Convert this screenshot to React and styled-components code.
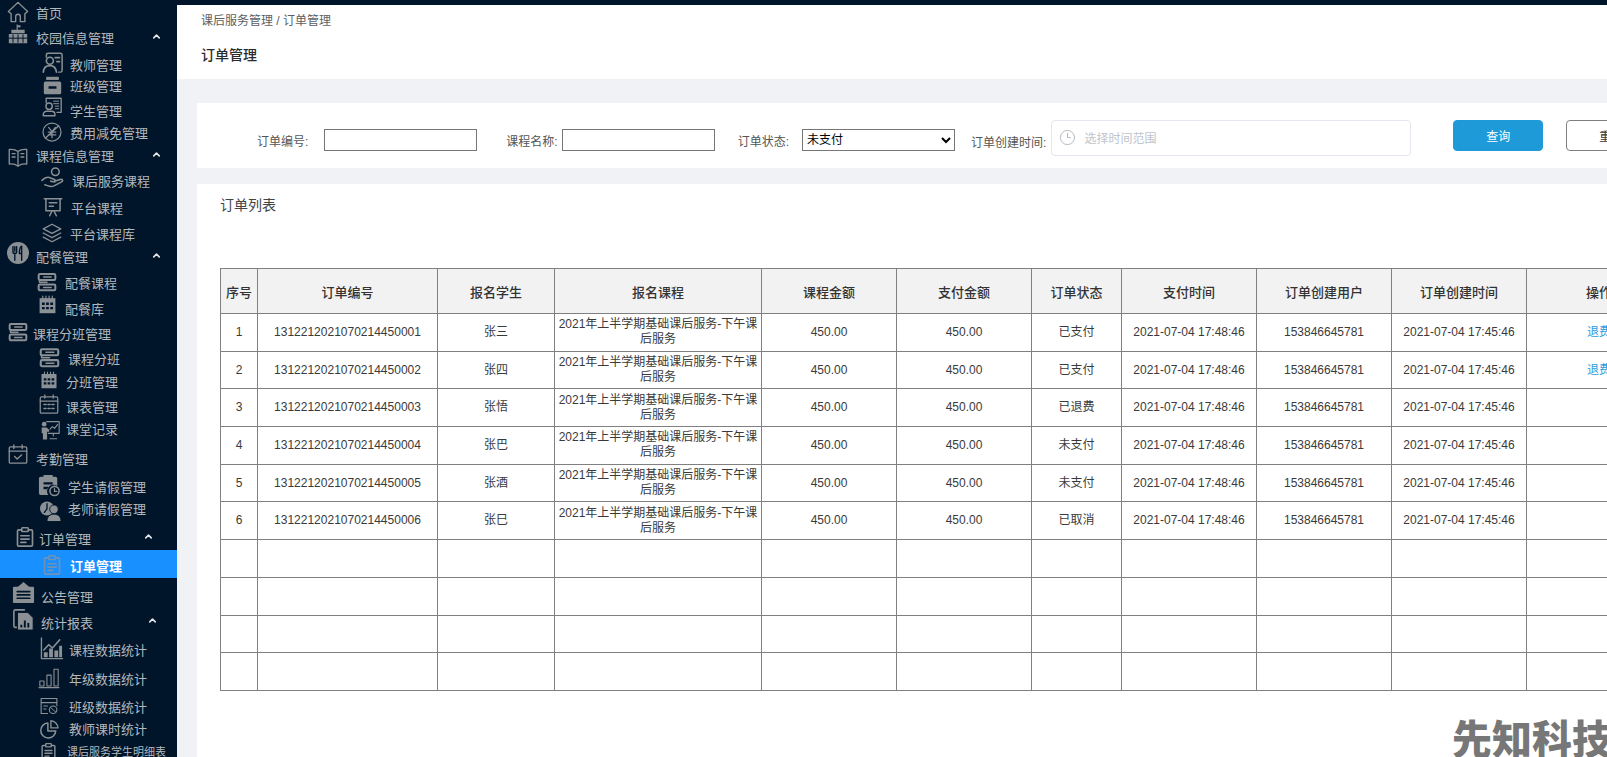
import styled, { createGlobalStyle } from "styled-components";
import { ChevronUp, Clock3 } from "lucide-react";

const NAVY = "#001529";

const GlobalStyle = createGlobalStyle`
  html, body {
    margin: 0;
    height: 100%;
    overflow: hidden;
    background: #fff;
  }
  body {
    font-family: "Liberation Sans", "Noto Sans CJK SC", sans-serif;
    font-size: 12px;
  }
`;

const Page = styled.div`
  display: flex;
  position: relative;
  width: 100%;
  height: 757px;
  overflow: hidden;
`;

// Sidebar
const Sidebar = styled.nav`
  flex: 0 0 177px;
  height: 757px;
  overflow: hidden;
  background: ${NAVY};
`;

const MenuRow = styled.div`
  display: flex;
  align-items: center;
  box-sizing: border-box;
  height: ${(p) => p.$h}px;
  padding-left: ${(p) => p.$left}px;
  padding-top: ${(p) => p.$pt || 0}px;
  padding-right: ${(p) => p.$cr || 15}px;
  background: ${(p) => (p.$active ? "#1890ff" : "transparent")};
  color: ${(p) => (p.$active ? "#fff" : "#b3b8bd")};
  font-size: ${(p) => p.$fs || 13}px;
  font-weight: ${(p) => (p.$active ? 700 : 400)};
  white-space: nowrap;
`;

const IconSlot = styled.span`
  display: flex;
  flex: 0 0 ${(p) => p.$w}px;
  align-items: center;
  color: ${(p) => (p.$active ? "#6f93b5" : "#8b9095")};
`;

const IconSvg = styled.svg`
  display: block;
  flex: none;
  overflow: visible;
  margin-top: ${(p) => (p.$dy || 0) * 2}px;
`;

const Caret = styled(ChevronUp)`
  margin-left: auto;
  margin-top: -3px;
  color: #e3e6e9;
`;

const Icon = ({ name, size, dy }) => (
  <IconSvg
    $dy={dy}
    width={size}
    height={size}
    viewBox="0 0 24 24"
    fill="none"
    stroke="currentColor"
    strokeWidth="1.7"
    strokeLinecap="round"
    strokeLinejoin="round"
  >
    {ICONS[name]}
  </IconSvg>
);

const Flow = (
  <>
    <rect x="2" y="2.5" width="20" height="7" rx="1.5" strokeWidth="2.4" />
    <rect x="2" y="15" width="20" height="7" rx="1.5" strokeWidth="2.4" />
    <path d="M3 9.5v2.7h9M8 6h9M8 18.5h9" strokeWidth="1.8" />
  </>
);

const SolidCalendar = (
  <>
    <rect x="2" y="4" width="20" height="19" fill="currentColor" stroke="none" />
    <path d="M6 1.5v4M10 1.5v4M14 1.5v4M18 1.5v4" strokeWidth="1.5" />
    <path
      d="M5 9.5h3.5v3H5zM10.2 9.5h3.5v3h-3.5zM15.5 9.5H19v3h-3.5zM5 15h3.5v3H5zM10.2 15h3.5v3h-3.5zM15.5 15H19v3h-3.5z"
      fill={NAVY}
      stroke="none"
    />
  </>
);

const Clipboard = (
  <>
    <path d="M8 3.5H4.5A1.5 1.5 0 0 0 3 5v16.5A1.5 1.5 0 0 0 4.5 23h15a1.5 1.5 0 0 0 1.5-1.5V5a1.5 1.5 0 0 0-1.5-1.5H16" strokeWidth="2" />
    <rect x="8" y="1" width="8" height="4.5" rx="1" strokeWidth="1.8" />
    <path d="M7 10.5h10M7 14.5h10M7 18.5h6" strokeWidth="2" />
  </>
);

const ICONS = {
  home: <path d="M1.5 11.5 12 1.5l10.5 10-3 2.5v8.5h-5V17a2.5 2.5 0 0 0-5 0v5.5h-5V14z" strokeWidth="1.5" />,
  school: (
    <>
      <path d="M11 1v6" strokeWidth="1.4" />
      <path d="M11 1.5h4v2.5h-4z" fill="currentColor" stroke="none" />
      <path d="M4 7h16v4H4zM1 12h22v11H1z" fill="currentColor" stroke="none" />
      <path d="M1 17h22M6 13v9M12 13v9M18 13v9" stroke={NAVY} strokeWidth="1.2" />
    </>
  ),
  teacher: (
    <>
      <path d="M5 6V3.5A2 2 0 0 1 7 1.5h14a2 2 0 0 1 2 2V21a2 2 0 0 1-2 2h-2" strokeWidth="1.7" />
      <circle cx="9" cy="10" r="4" strokeWidth="1.9" />
      <path d="M1.5 23c.3-4.500 3-7.500 7.500-7.500s7 3 7.500 7.500M15 6.500h5M17 11h3" strokeWidth="1.9" />
    </>
  ),
  classRoom: (
    <>
      <path d="M4 1h16v4H4z" fill="currentColor" stroke="none" />
      <path fillRule="evenodd" d="M3 7h18a2 2 0 0 1 2 2v12a2 2 0 0 1-2 2H3a2 2 0 0 1-2-2V9a2 2 0 0 1 2-2zm4 6v3h10v-3z" fill="currentColor" stroke="none" />
    </>
  ),
  student: (
    <>
      <path d="M5 7V1.500h18v17h-5" strokeWidth="1.6" />
      <circle cx="8.500" cy="11" r="3.800" strokeWidth="1.7" />
      <path d="M1.500 22.500v-1.500a4 4 0 0 1 4-4h6a4 4 0 0 1 4 4v1.500z" strokeWidth="1.7" />
      <path d="M14 5h6M14 8h6M16 11h4M16 14h4" strokeWidth="1.2" />
    </>
  ),
  fee: (
    <>
      <circle cx="12" cy="12" r="10.800" strokeWidth="1.500" />
      <path d="M8 6.500l4 5 4-5M7.500 12h9M7.500 15.500h9M12 11.500V19M20 4.500 4 19.500" strokeWidth="1.500" />
    </>
  ),
  book: (
    <>
      <path d="M12 5.500C9.500 3.500 5.500 2.500 1.500 3v17.500c4-.5 8 .5 10.500 2.500 2.500-2 6.500-3 10.500-2.500V3c-4-.5-8 .5-10.500 2.500zM12 5.500V23" strokeWidth="1.600" />
      <path d="M5 8h3.500M5 12h3.500M15.500 8H19M15.500 12H19" strokeWidth="1.600" />
    </>
  ),
  hand: (
    <>
      <circle cx="15" cy="6" r="4" strokeWidth="1.600" />
      <path d="M1 15c3-3 6-4 9-2.500l4 1.500c2 1 1 3-1 2.500l-3-.7M14 16l6-2c2.500-.6 3.500 1.500 1.500 2.500L13 21c-3 1.300-6-.5-9-1.500" strokeWidth="1.600" />
    </>
  ),
  board: (
    <>
      <path d="M1.500 2h21M3.500 2v14.500h17V2M8 22.500l3-6M16 22.500l-3-6M7.500 7h9M7.500 11h5" strokeWidth="1.800" />
    </>
  ),
  layers: (
    <>
      <path d="M12 1.500 22.500 7 12 12.500 1.500 7zM1.500 12 12 17.500 22.500 12M1.500 17 12 22.500 22.500 17" strokeWidth="1.600" />
    </>
  ),
  fork: (
    <>
      <circle cx="12" cy="12" r="12" fill="currentColor" stroke="none" />
      <path d="M6.500 5v5.500a2 2 0 0 0 2 2V20M8.500 5v5M10.500 5v5.500a2 2 0 0 1-2 2M16 4.500V20M16 4.500c-1.800 1-2.500 3.500-2.500 8H16" stroke={NAVY} strokeWidth="1.500" />
    </>
  ),
  flow: Flow,
  calendarSolid: SolidCalendar,
  calendarDots: (
    <>
      <rect x="1.500" y="3.500" width="21" height="19.500" rx="1.500" strokeWidth="1.500" />
      <path d="M1.500 8.500h21M7 1v4M17 1v4" strokeWidth="1.500" />
      <path d="M6 12.500h2.500M10.800 12.500h2.500M15.500 12.500H18M6 17.500h2.500M10.800 17.500h2.500M15.500 17.500H18" strokeWidth="1.800" />
    </>
  ),
  lecture: (
    <>
      <circle cx="5" cy="5" r="2.800" fill="currentColor" stroke="none" />
      <path d="M2 9h6l3 3v2H8.500v9.500h-5V16H2z" fill="currentColor" stroke="none" />
      <path d="M8 2h15v14H10M16 16v3M12 22.500h8M12 11l3-3 2.500 2 3.500-4.500" strokeWidth="1.400" />
    </>
  ),
  calendarCheck: (
    <>
      <rect x="1.500" y="3.500" width="21" height="19.500" rx="1.500" strokeWidth="1.600" />
      <path d="M1.500 8.500h21M7 1v4.500M17 1v4.500M8 15l3 3 5.500-5" strokeWidth="1.600" />
    </>
  ),
  leave: (
    <>
      <path fillRule="evenodd" d="M3 3h3V1h10v2h3a2 2 0 0 1 2 2v8.200A7 7 0 0 0 11.200 23H3a2 2 0 0 1-2-2V5a2 2 0 0 1 2-2zm3 6v2.500h10V9zm0 5v2.500h5V14z" fill="currentColor" stroke="none" />
      <circle cx="18" cy="18.500" r="5" strokeWidth="1.700" />
      <path d="M18 16v3h2.500" strokeWidth="1.400" />
    </>
  ),
  teacherLeave: (
    <>
      <circle cx="8" cy="8.500" r="8" fill="currentColor" stroke="none" />
      <path d="M8 3v6l-3 4" stroke={NAVY} strokeWidth="1.500" />
      <circle cx="16" cy="9.500" r="5" fill="currentColor" stroke={NAVY} strokeWidth="1" />
      <path d="M8 23c0-5 3-8 8-8s8 3 8 8z" fill="currentColor" stroke={NAVY} strokeWidth="1" />
    </>
  ),
  clipboard: Clipboard,
  notice: (
    <>
      <path d="M12 1 5 7h14z" fill="currentColor" stroke="none" />
      <rect x="1" y="6" width="22" height="17" rx="1" fill="currentColor" stroke="none" />
      <path d="M5.500 11h13M5.500 14.500h13M5.500 18h13" stroke={NAVY} strokeWidth="1.800" />
    </>
  ),
  report: (
    <>
      <path d="M4 21H2.500A1.500 1.500 0 0 1 1 19.500V2.500A1.500 1.500 0 0 1 2.500 1H13" strokeWidth="1.800" />
      <path d="M5.500 4H17l6 6v14H5.500z" fill="currentColor" stroke={NAVY} strokeWidth="1" />
      <path d="M9.500 21v-3M13.500 21v-8M17.500 21v-5" stroke={NAVY} strokeWidth="2.200" strokeLinecap="butt" />
    </>
  ),
  chart: (
    <>
      <path d="M1.500 1v21.500h22" strokeWidth="1.400" />
      <path d="M4 13.500 9 8l4 3.500L20.500 3" strokeWidth="1.600" />
      <path d="M4 16h4v5H4zM9.500 12h4v9h-4zM15 14h4v7h-4zM20 9h3v12h-3z" fill="currentColor" stroke="none" />
    </>
  ),
  bars: (
    <>
      <path d="M1 15.500h5v6H1zM9.500 8.500h5v13h-5zM18 1.500h5v20h-5zM0 23.500h24" strokeWidth="1.300" />
    </>
  ),
  panel: (
    <>
      <path d="M10 22H1.500V2h21v9.500M1.500 7.500h21M5 12h5M5 16h3" strokeWidth="1.500" />
      <circle cx="17.500" cy="17" r="5" strokeWidth="1.500" />
      <path d="M14 14l7 6" strokeWidth="1.300" />
    </>
  ),
  pie: (
    <>
      <path d="M10.500 4a10 10 0 1 0 10.500 10.500H10.500z" strokeWidth="2" />
      <path d="M14.500 1v9.500H24A10 10 0 0 0 14.500 1z" strokeWidth="1.800" />
    </>
  ),
};

// left: icon x, text: label x, size: icon size, dy: icon shift from the text line
const MENU = [
  { label: "首页", icon: "home", left: 7, text: 36, size: 22, dy: -0.5, h: 24 },
  { label: "校园信息管理", icon: "school", left: 8, text: 36, size: 20, dy: -4, h: 25, pt: 2, open: true },
  { label: "教师管理", icon: "teacher", left: 42, text: 70, size: 21, dy: -1.5, h: 25, pt: 5 },
  { label: "班级管理", icon: "classRoom", left: 43, text: 70, size: 19, dy: 0, h: 22 },
  { label: "学生管理", icon: "student", left: 42, text: 70, size: 20, dy: -3.5, h: 23, pt: 6 },
  { label: "费用减免管理", icon: "fee", left: 42, text: 70, size: 20, dy: -0.5, h: 23, pt: 4 },
  { label: "课程信息管理", icon: "book", left: 8, text: 36, size: 20, dy: 1, h: 25, pt: 2, open: true },
  { label: "课后服务课程", icon: "hand", left: 41, text: 72, size: 23, dy: -3, h: 25, pt: 2 },
  { label: "平台课程", icon: "board", left: 43, text: 71, size: 20, dy: 0, h: 26, pt: 4 },
  { label: "平台课程库", icon: "layers", left: 42, text: 70, size: 20, dy: -0.5, h: 25, pt: 5 },
  { label: "配餐管理", icon: "fork", left: 7, text: 36, size: 22, dy: -3.5, h: 25, pt: 2, open: true },
  { label: "配餐课程", icon: "flow", left: 37, text: 65, size: 20, dy: 0, h: 26, pt: 2 },
  { label: "配餐库", icon: "calendarSolid", left: 38, text: 65, size: 19, dy: -4, h: 25, pt: 4 },
  { label: "课程分班管理", icon: "flow", left: 8, text: 33, size: 20, dy: -1.5, h: 25, pt: 4 },
  { label: "课程分班", icon: "flow", left: 39, text: 68, size: 21, dy: -1, h: 24, pt: 4 },
  { label: "分班管理", icon: "calendarSolid", left: 40, text: 66, size: 18, dy: -1.5, h: 25, pt: 2 },
  { label: "课表管理", icon: "calendarDots", left: 39, text: 66, size: 20, dy: -2.5, h: 21, pt: 5 },
  { label: "课堂记录", icon: "lecture", left: 40, text: 66, size: 20, dy: 2, h: 28 },
  { label: "考勤管理", icon: "calendarCheck", left: 8, text: 36, size: 20, dy: -4, h: 30, pt: 2 },
  { label: "学生请假管理", icon: "leave", left: 38, text: 68, size: 22, dy: -1, h: 24, pt: 4 },
  { label: "老师请假管理", icon: "teacherLeave", left: 40, text: 68, size: 21, dy: 3, h: 24 },
  { label: "订单管理", icon: "clipboard", left: 15, text: 39, size: 20, dy: -1, h: 30, pt: 6, open: true, cr: 23 },
  { label: "订单管理", icon: "clipboard", left: 42, text: 70, size: 20, dy: -0.5, h: 28, pt: 2, active: true },
  { label: "公告管理", icon: "notice", left: 12, text: 41, size: 23, dy: -4, h: 30, pt: 6 },
  { label: "统计报表", icon: "report", left: 13, text: 41, size: 21, dy: -2.5, h: 28, open: true, cr: 19 },
  { label: "课程数据统计", icon: "chart", left: 40, text: 69, size: 23, dy: -1, h: 27 },
  { label: "年级数据统计", icon: "bars", left: 39, text: 69, size: 20, dy: 0, h: 28, pt: 2 },
  { label: "班级数据统计", icon: "panel", left: 40, text: 69, size: 18, dy: 0, h: 25, pt: 5 },
  { label: "教师课时统计", icon: "pie", left: 40, text: 69, size: 18, dy: 1, h: 22, pt: 2 },
  { label: "课后服务学生明细表", icon: "clipboard", left: 40, text: 67, size: 17, dy: 0, h: 22, pt: 4, fs: 11 },
];

// Main area
const Main = styled.main`
  flex: 1;
  min-width: 0;
  overflow: hidden;
  background: #f0f2f5;
`;

const TopStrip = styled.div`
  height: 5px;
  background: ${NAVY};
`;

const Header = styled.header`
  box-sizing: border-box;
  height: 74px;
  padding: 8px 24px 0;
  background: #fff;
`;

const Breadcrumb = styled.div`
  line-height: 16px;
  color: #5c5f64;
`;

const PageTitle = styled.h1`
  margin: 16px 0 0;
  font-size: 14px;
  font-weight: 500;
  line-height: 20px;
  color: #2b2b2b;
`;

const Content = styled.div`
  display: flex;
  flex-direction: column;
  gap: 16px;
  width: 1480px;
  padding: 24px 0 0 20px;
`;

const SearchCard = styled.section`
  display: flex;
  align-items: flex-start;
  box-sizing: border-box;
  height: 65px;
  padding: 17px 0 0 60px;
  background: #fff;
`;

const Field = styled.div`
  display: flex;
  flex: none;
  align-items: center;
  gap: ${(p) => p.$gap}px;
  box-sizing: border-box;
  height: 36px;
  margin-left: ${(p) => p.$ml || 0}px;
  padding-top: ${(p) => (p.$low ? 4 : 0)}px;
`;

const Label = styled.label`
  color: #555;
  white-space: nowrap;
  padding-top: ${(p) => p.$pt || 0}px;
`;

const TextInput = styled.input`
  box-sizing: border-box;
  width: 153px;
  height: 22px;
  padding: 1px 6px;
  border: 1px solid #767676;
  background: #fff;
`;

const StatusSelect = styled.select`
  box-sizing: border-box;
  width: 153px;
  height: 22px;
  border: 1px solid #767676;
  background: #fff;
  color: #000;
  font-family: inherit;
  font-size: 12px;
`;

const RangePicker = styled.div`
  display: flex;
  align-items: center;
  gap: 8px;
  box-sizing: border-box;
  width: 360px;
  height: 36px;
  padding: 0 0 2px 7px;
  border: 1px solid #e4e7ed;
  border-radius: 4px;
  color: #c0c4cc;
`;

const PickerClock = styled(Clock3)`
  color: #a9adb3;
`;

const Button = styled.button`
  flex: none;
  width: 90px;
  height: 31px;
  margin-left: ${(p) => p.$ml}px;
  border: 1px solid ${(p) => (p.$primary ? "#1e9ad9" : "#7f7f7f")};
  border-radius: 4px;
  background: ${(p) => (p.$primary ? "#1e9ad9" : "#fff")};
  color: ${(p) => (p.$primary ? "#fff" : "#333")};
  font-family: inherit;
  font-size: 12px;
`;

const ListCard = styled.section`
  box-sizing: border-box;
  height: 600px;
  padding: 11px 0 0 23px;
  background: #fff;
`;

const ListTitle = styled.h2`
  margin: 0 0 53px;
  font-size: 14px;
  font-weight: 400;
  line-height: 20px;
  color: #444;
`;

const OrderTable = styled.table`
  width: 1451px;
  table-layout: fixed;
  border-collapse: collapse;
  color: #3a3a3a;
  text-align: center;
`;

const HeadCell = styled.th`
  height: 44px;
  padding: 0;
  border: 1px solid #808080;
  background: #f2f2f2;
  font-size: 13px;
  font-weight: 500;
  color: #333;
`;

const Cell = styled.td`
  box-sizing: border-box;
  height: 37.7px;
  padding: 1px;
  border: 1px solid #808080;
  line-height: 15px;
`;

const RefundLink = styled.a`
  color: #2f9be0;
  cursor: pointer;
`;

// lies over the page corner
const Watermark = styled.div`
  position: absolute;
  right: -5px;
  bottom: -6px;
  font-size: 40px;
  font-weight: 900;
  line-height: 46px;
  color: #777;
  white-space: nowrap;
`;

const COLUMNS = [
  ["序号", 37],
  ["订单编号", 180],
  ["报名学生", 117],
  ["报名课程", 207],
  ["课程金额", 135],
  ["支付金额", 135],
  ["订单状态", 90],
  ["支付时间", 135],
  ["订单创建用户", 135],
  ["订单创建时间", 135],
  ["操作", 145],
];

const ORDERS = [
  ["张三", "已支付", true],
  ["张四", "已支付", true],
  ["张悟", "已退费", false],
  ["张巴", "未支付", false],
  ["张酒", "未支付", false],
  ["张巳", "已取消", false],
];

const EMPTY_ROWS = [7, 8, 9, 10];

function App() {
  return (
    <Page>
      <GlobalStyle />
      <Sidebar>
        {MENU.map((item, i) => (
          <MenuRow
            key={i}
            $h={item.h}
            $left={item.left}
            $pt={item.pt}
            $cr={item.cr}
            $fs={item.fs}
            $active={item.active}
          >
            <IconSlot $w={item.text - item.left} $active={item.active}>
              <Icon name={item.icon} size={item.size} dy={item.dy} />
            </IconSlot>
            {item.label}
            {item.open && <Caret size={11} strokeWidth={3.5} />}
          </MenuRow>
        ))}
      </Sidebar>

      <Main>
        <TopStrip />
        <Header>
          <Breadcrumb>课后服务管理 / 订单管理</Breadcrumb>
          <PageTitle>订单管理</PageTitle>
        </Header>

        <Content>
          <SearchCard>
            <Field $gap={16} $low>
              <Label>订单编号:</Label>
              <TextInput />
            </Field>
            <Field $gap={4} $ml={29} $low>
              <Label>课程名称:</Label>
              <TextInput />
            </Field>
            <Field $gap={13} $ml={23} $low>
              <Label>订单状态:</Label>
              <StatusSelect defaultValue="未支付">
                <option>未支付</option>
                <option>已支付</option>
                <option>已退费</option>
                <option>已取消</option>
              </StatusSelect>
            </Field>
            <Field $gap={5} $ml={16}>
              <Label $pt={6}>订单创建时间:</Label>
              <RangePicker>
                <PickerClock size={17} strokeWidth={1.2} />
                选择时间范围
              </RangePicker>
            </Field>
            <Button $primary $ml={42}>查询</Button>
            <Button $ml={23}>重置</Button>
          </SearchCard>

          <ListCard>
            <ListTitle>订单列表</ListTitle>
            <OrderTable>
              <colgroup>
                {COLUMNS.map(([title, width]) => (
                  <col key={title} width={width} />
                ))}
              </colgroup>
              <thead>
                <tr>
                  {COLUMNS.map(([title]) => (
                    <HeadCell key={title}>{title}</HeadCell>
                  ))}
                </tr>
              </thead>
              <tbody>
                {ORDERS.map(([student, status, canRefund], i) => (
                  <tr key={i}>
                    <Cell>{i + 1}</Cell>
                    <Cell>131221202107021445000{i + 1}</Cell>
                    <Cell>{student}</Cell>
                    <Cell>2021年上半学期基础课后服务-下午课后服务</Cell>
                    <Cell>450.00</Cell>
                    <Cell>450.00</Cell>
                    <Cell>{status}</Cell>
                    <Cell>2021-07-04 17:48:46</Cell>
                    <Cell>153846645781</Cell>
                    <Cell>2021-07-04 17:45:46</Cell>
                    <Cell>{canRefund && <RefundLink>退费</RefundLink>}</Cell>
                  </tr>
                ))}
                {EMPTY_ROWS.map((row) => (
                  <tr key={row}>
                    {COLUMNS.map(([title]) => (
                      <Cell key={title} />
                    ))}
                  </tr>
                ))}
              </tbody>
            </OrderTable>
          </ListCard>
        </Content>
      </Main>

      <Watermark>先知科技</Watermark>
    </Page>
  );
}

export default App;
